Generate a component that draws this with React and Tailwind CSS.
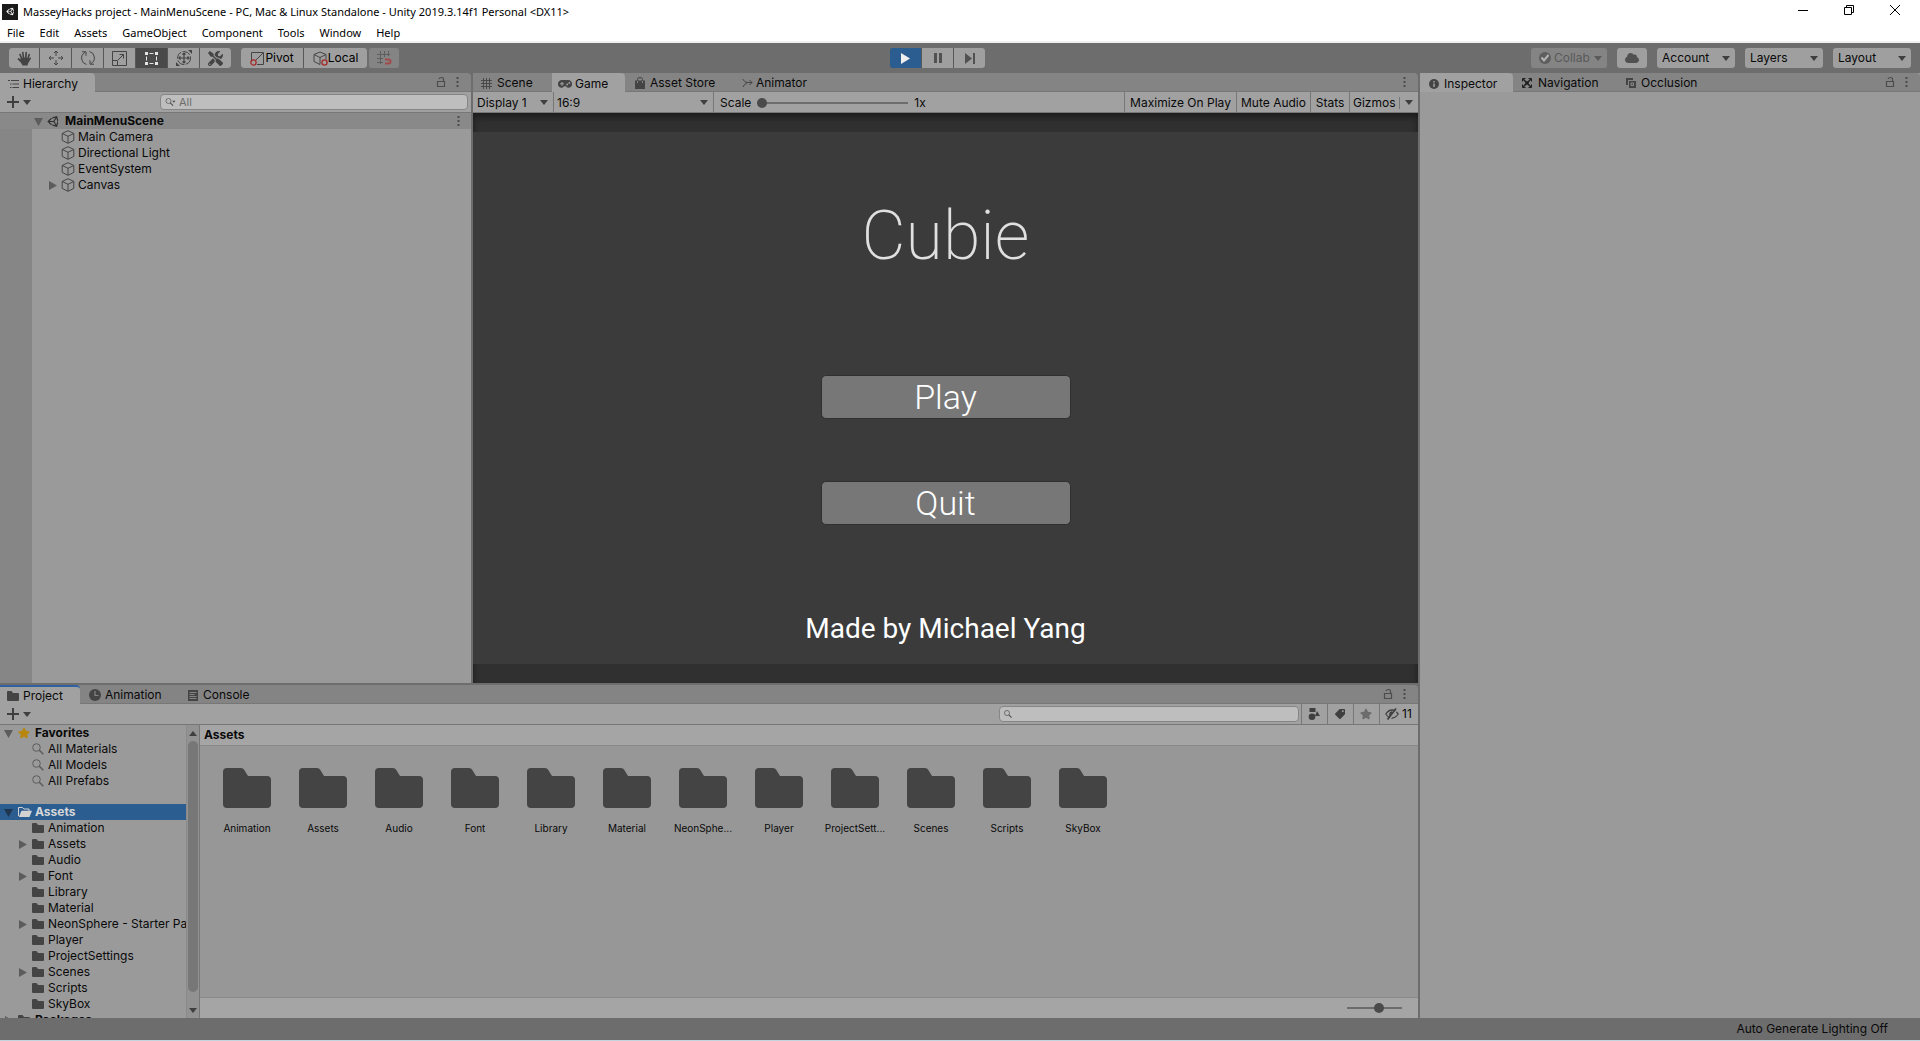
import clsx from "clsx";
import { FaCloud, FaStar, FaTag, FaTools, FaUnity } from "react-icons/fa";

const MENUS = [
  "File",
  "Edit",
  "Assets",
  "GameObject",
  "Component",
  "Tools",
  "Window",
  "Help",
];

const GAME_OBJECTS = [
  { name: "Main Camera" },
  { name: "Directional Light" },
  { name: "EventSystem" },
  { name: "Canvas", expandable: true },
];

const FAVORITES = ["All Materials", "All Models", "All Prefabs"];

const FOLDERS = [
  { name: "Animation" },
  { name: "Assets", expandable: true },
  { name: "Audio" },
  { name: "Font", expandable: true },
  { name: "Library" },
  { name: "Material" },
  { name: "NeonSphere - Starter Pa", short: "NeonSphe...", expandable: true },
  { name: "Player" },
  { name: "ProjectSettings", short: "ProjectSett..." },
  { name: "Scenes", expandable: true },
  { name: "Scripts" },
  { name: "SkyBox" },
];

/* ---------- icons ---------- */

function Svg({ size = 12, w, h, box, className, children }) {
  return (
    <svg
      width={w ?? size}
      height={h ?? size}
      viewBox={box ?? `0 0 ${w ?? size} ${h ?? size}`}
      fill="none"
      stroke="currentColor"
      className={clsx("shrink-0", className)}
      aria-hidden="true"
    >
      {children}
    </svg>
  );
}

const Caret = ({ className }) => (
  <Svg w={8} h={5} className={className}>
    <path d="M0 0h8L4 5z" fill="currentColor" stroke="none" />
  </Svg>
);

const Foldout = ({ open, selected }) => (
  <Svg size={9} className={selected ? "text-[#1f3650]" : "text-[#5c5c5c]"}>
    <path
      d={open ? "M0 1h9L4.500 9z" : "M1 0v9l8-4.500z"}
      fill="currentColor"
      stroke="none"
    />
  </Svg>
);

const FolderIcon = ({ className }) => (
  <Svg w={12} h={10} className={className}>
    <path
      d="M0 1q0-1 1-1h3.500l1.500 2h5q1 0 1 1v6q0 1-1 1H1q-1 0-1-1z"
      fill="currentColor"
      stroke="none"
    />
  </Svg>
);

const BigFolder = () => (
  <Svg w={48} h={40} className="text-[#444444]">
    <path
      d="M0 4q0-4 4-4h14q2 0 3 1.500L25 8h19q4 0 4 4v24q0 4-4 4H4q-4 0-4-4z"
      fill="currentColor"
      stroke="none"
    />
  </Svg>
);

const OpenFolder = () => (
  <Svg w={14} h={10} className="text-[#d2d2d2]">
    <path d="M.5 9V.5H4.500l1.500 1.500h5V4" />
    <path d="M3.500 3.800H14L11.500 10H.8z" fill="currentColor" stroke="none" />
  </Svg>
);

const CubeIcon = () => (
  <Svg size={14} className="text-[#454545]">
    <path d="M7 .7l5.800 2.700v7L7 13.300 1.200 10.400v-7zM1.200 3.500L7 6.300l5.800-2.800M7 6.300v7" />
  </Svg>
);

const LockIcon = () => (
  <Svg w={10} h={12} className="text-[#4c4c4c]">
    <path d="M1.500 5.500h7v5h-7zM7.500 5.500V3.500Q7.500 1.500 5.500 1.500T3 3" strokeWidth="1.200" />
  </Svg>
);

const DotsIcon = () => (
  <Svg w={3} h={11} className="text-[#4c4c4c]">
    <path d="M.5 0h2v2h-2zM.5 4h2v2h-2zM.5 8h2v2h-2z" fill="currentColor" stroke="none" />
  </Svg>
);

const SearchIcon = ({ size = 12, dropdown }) => (
  <Svg w={dropdown ? size + 3 : size} h={size} box={dropdown ? "0 0 15 12" : "0 0 12 12"}>
    <circle cx="4.500" cy="4.500" r="3.800" />
    <path d="M7.300 7.300L11.300 11.300" strokeWidth="1.600" />
    {dropdown && <path d="M10 4h5l-2.500 3z" fill="currentColor" stroke="none" />}
  </Svg>
);

const ListIcon = () => (
  <Svg w={11} h={10}>
    <path d="M0 1.500h2M3 1.500h8M2 5h1.500M4.500 5H11M2 8.500h1.500M4.500 8.500H11" />
  </Svg>
);

const HashIcon = () => (
  <Svg size={11}>
    <path d="M2.500 0v11M5.500 0v11M8.500 0v11M0 2.500h11M0 5.500h11M0 8.500h11" strokeWidth=".9" />
  </Svg>
);

const GamepadIcon = () => (
  <Svg w={14} h={8}>
    <path
      d="M3.800 0h6.400A3.800 3.800 0 0 1 14 4a3.600 3.600 0 0 1-3.600 3.800Q9 7.800 8 6.300H6Q5 7.800 3.600 7.800A3.600 3.600 0 0 1 0 4 3.800 3.800 0 0 1 3.800 0z"
      fill="currentColor"
      stroke="none"
    />
    <path d="M2 3.800h4M4 1.800v4" stroke="#a1a1a1" />
    <circle cx="9.200" cy="4.500" r=".9" fill="#a1a1a1" stroke="none" />
    <circle cx="11.300" cy="3" r=".9" fill="#a1a1a1" stroke="none" />
  </Svg>
);

const BagIcon = () => (
  <Svg w={10} h={12}>
    <path d="M0 3.500h10V12H0z" fill="currentColor" stroke="none" />
    <path d="M2.500 5.500V2.500Q2.500.5 5 .5T7.500 2.500V5.500" />
    <path d="M2.500 4v2M7.500 4v2" stroke="#848484" />
  </Svg>
);

const AnimatorIcon = () => (
  <Svg w={11} h={10}>
    <path d="M.5 1Q3 5 6 4.500h4M1 9Q2 6 5 5M7.500 2L10 4.500 7.500 7" />
  </Svg>
);

const InfoIcon = () => (
  <Svg size={10}>
    <circle cx="5" cy="5" r="5" fill="currentColor" stroke="none" />
    <path d="M5 2v1.400M5 4.400V8" stroke="#a6a6a6" strokeWidth="1.400" />
  </Svg>
);

const NavigationIcon = () => (
  <Svg size={10} className="text-[#202020]">
    <path d="M1 1l8 8M9 1L1 9" strokeWidth="1.500" />
    <path d="M.5 3.500v-3h3M6.500.5h3v3M9.500 6.500v3h-3M3.500 9.500h-3v-3" />
    <circle cx="5" cy="5" r="1.800" fill="currentColor" stroke="none" />
  </Svg>
);

const OcclusionIcon = () => (
  <Svg size={10}>
    <path d="M0 0h7v2H2v5H0z" fill="currentColor" stroke="none" />
    <path d="M3 3h7v7H3z" fill="currentColor" stroke="none" />
    <path d="M5 5h2.500v2.500H5z" stroke="#8c8c8c" />
  </Svg>
);

const ClockIcon = () => (
  <Svg size={12}>
    <circle cx="6" cy="6" r="6" fill="currentColor" stroke="none" />
    <path d="M6 2v4.500h3.500" stroke="#848484" strokeWidth="1.200" />
  </Svg>
);

const ConsoleIcon = () => (
  <Svg w={10} h={11}>
    <path d="M0 0h10v11H0z" fill="currentColor" stroke="none" />
    <path d="M1.500 2.500h7M1.500 4.500h5M1.500 6.500h7M1.500 8.500h7" stroke="#848484" />
  </Svg>
);

const PlusIcon = () => (
  <Svg size={12} className="text-[#3f3f3f]">
    <path d="M6 0v12M0 6h12" strokeWidth="2" />
  </Svg>
);

const HandIcon = () => (
  <Svg size={15}>
    <path
      d="M4.800 8L3 3.500M6.500 7L5.800 1.500M8.800 7l.4-5.500M10.800 8l1.400-4.500M5.500 11.500L1.500 8"
      strokeWidth="1.700"
      strokeLinecap="round"
    />
    <path
      d="M3.900 7.500Q7.500 5.500 11.600 7.500L13.300 6.500Q14.500 6.500 14 7.500L11 12.500 10.500 14.500H5.500L4.500 12.500 2.500 9.500z"
      fill="currentColor"
      stroke="none"
    />
  </Svg>
);

const MoveIcon = () => (
  <Svg size={16}>
    <path d="M8 1v5M8 10v5M1 8h5M10 8h5M6 3l2-2 2 2M6 13l2 2 2-2M3 6L1 8l2 2M13 6l2 2-2 2" />
  </Svg>
);

const RotateIcon = () => (
  <Svg size={16}>
    <path d="M6.500 14.500A6.500 6.500 0 0 1 5 2.500M2 1.800h4v4M9.500 1.500a6.500 6.500 0 0 1 1.500 12M14 14.200h-4v-4" />
  </Svg>
);

const ScaleIcon = () => (
  <Svg size={15}>
    <path d="M.5.5h14v14H.5zM.5 9.500h5v5M6 9l5.500-5.500M7.500 3.500h4v4" />
  </Svg>
);

const RectIcon = () => (
  <Svg size={15} className="text-[#e4e4e4]">
    <path d="M5.500 2.500h4M5.500 12.500h4M2.500 5.500v4M12.500 5.500v4" />
    <path d="M1 1h3v3H1zM11 1h3v3h-3zM1 11h3v3H1zM11 11h3v3h-3z" fill="currentColor" stroke="none" />
  </Svg>
);

const TransformIcon = () => (
  <Svg size={16}>
    <circle cx="8" cy="8" r="6.500" strokeDasharray="8 1.500" />
    <path d="M8 3v10M3 8h10M6.500 4.500L8 3l1.500 1.500M6.500 11.500L8 13l1.500-1.500M4.500 6.500L3 8l1.500 1.500M11.500 6.500L13 8l-1.500 1.500" strokeWidth="1.200" />
    <path d="M12 0h4v4zM0 12v4h4z" fill="currentColor" stroke="none" />
  </Svg>
);

const PivotIcon = () => (
  <Svg size={15}>
    <path d="M1.500 9V1.500h12v12H7M5 10l8-8" />
    <circle cx="3.500" cy="11.500" r="2.600" stroke="#a82828" strokeWidth="1.300" />
  </Svg>
);

const LocalIcon = () => (
  <Svg size={15}>
    <path d="M7 1l6 2.500v5M7 1L1 3.500v7L7 13.500M1 3.500l6 3 6-3M7 6.500v7" />
    <circle cx="11.500" cy="11.500" r="2.600" stroke="#a82828" strokeWidth="1.300" />
  </Svg>
);

const SnapIcon = () => (
  <Svg size={15} className="text-[#5e5e5e]">
    <path d="M3.500 0v13M7.500 0v6M11.500 0v5M0 3.500h13M0 7.500h6M0 11.500h6" />
    <path d="M8 8.500h3.500a2 2 0 0 1 0 4H8" stroke="#a34a4a" strokeWidth="2" />
  </Svg>
);

const ShapesIcon = () => (
  <Svg size={12}>
    <path d="M1.500 0h6v4h-6zM9 3l3 5H7z" fill="currentColor" stroke="none" />
    <circle cx="4" cy="8.700" r="3.300" fill="currentColor" stroke="none" />
  </Svg>
);

const HiddenIcon = () => (
  <Svg w={14} h={12} className="text-[#3f3f3f]">
    <path d="M.8 6Q3.500 2 7 2t6.200 4Q10.500 10 7 10T.8 6z" strokeWidth="1.300" />
    <path d="M5 7.500Q4.500 4.500 7 4" strokeWidth="1.600" />
    <path d="M4.500 11.500L12.500 1" stroke="#a1a1a1" strokeWidth="1.500" />
    <path d="M2.500 11.500L11 .5" strokeWidth="1.700" />
  </Svg>
);

/* ---------- small pieces ---------- */

function Tab({ icon, label, active, focused, className }) {
  return (
    <button
      type="button"
      role="tab"
      aria-selected={!!active}
      className={clsx(
        "flex items-center shrink-0 h-full whitespace-nowrap",
        active ? "bg-[#a1a1a1] rounded-tr-sm" : "border-b border-[#777777]",
        focused ? "border-t-2 border-[#2f62a3]" : "pt-[2px]",
        className
      )}
    >
      <span className="flex text-[#444444]">{icon}</span>
      {label}
    </button>
  );
}

function TabBar({ children, lock = true }) {
  return (
    <div
      role="tablist"
      className="flex shrink-0 h-[19px] bg-[#848484] rounded-tr-sm"
    >
      {children}
      <div className="flex-1 flex items-center justify-end gap-[10px] pr-3 border-b border-[#777777]">
        {lock && <LockIcon />}
        <DotsIcon />
      </div>
    </div>
  );
}

function Dropdown({ label, value, className }) {
  return (
    <div className={clsx("relative flex items-center", className)}>
      <select
        aria-label={label}
        defaultValue={value}
        className="appearance-none w-full h-full outline-none"
      >
        <option>{value}</option>
      </select>
      <Caret className="absolute right-[5px] text-[#3f3f3f] pointer-events-none" />
    </div>
  );
}

function ToolButton({ label, active, className, children }) {
  return (
    <button
      type="button"
      aria-label={label}
      className={clsx(
        "flex items-center justify-center h-5",
        active ? "bg-[#4a4a4a]" : "bg-[#9f9f9f]",
        className
      )}
    >
      {children}
    </button>
  );
}

function Slider({ label, value, className }) {
  return (
    <input
      type="range"
      aria-label={label}
      defaultValue={value}
      className={clsx(
        "appearance-none bg-transparent h-[10px] [&::-webkit-slider-runnable-track]:h-[2px] [&::-webkit-slider-runnable-track]:bg-[#6c6c6c] [&::-webkit-slider-thumb]:appearance-none [&::-webkit-slider-thumb]:size-[10px] [&::-webkit-slider-thumb]:rounded-full [&::-webkit-slider-thumb]:bg-[#4a4a4a] [&::-webkit-slider-thumb]:-mt-1",
        className
      )}
    />
  );
}

function CreateButton() {
  return (
    <button type="button" aria-label="Create" className="flex items-center gap-1 pl-[7px]">
      <PlusIcon />
      <Caret className="text-[#3f3f3f]" />
    </button>
  );
}

function SearchBox({ label, placeholder, dropdown, className }) {
  return (
    <div className={clsx("relative flex items-center", className)}>
      <span className="absolute left-[5px] text-[#4c4c4c]">
        <SearchIcon size={8} dropdown={dropdown} />
      </span>
      <input
        type="text"
        aria-label={label}
        placeholder={placeholder}
        className="w-full h-4 pl-[18px] rounded-[4px] border border-[#868686] bg-[#bebebe] text-[11px] placeholder:text-[#6c6c6c] outline-none"
      />
    </div>
  );
}

/* ---------- window chrome ---------- */

function TitleBar() {
  return (
    <header className="shrink-0 bg-white text-black text-[11px] border-b-2 border-[#f0f0f0] font-['Noto_Sans','Open_Sans',sans-serif]">
      <div className="flex h-[23px] px-[2px]">
        <div className="flex items-center gap-[5px] flex-1">
          <span className="flex items-center justify-center size-4 bg-[#1a1a1a] text-white">
            <FaUnity size={9} />
          </span>
          <h1 className="whitespace-nowrap">
            MasseyHacks project - MainMenuScene - PC, Mac &amp; Linux Standalone
            - Unity 2019.3.14f1 Personal &lt;DX11&gt;
          </h1>
        </div>
        <div className="flex h-5">
          <button type="button" aria-label="Minimize" className="flex items-center justify-center w-[46px]">
            <Svg size={10}>
              <path d="M0 5.500h10" />
            </Svg>
          </button>
          <button type="button" aria-label="Restore" className="flex items-center justify-center w-[46px]">
            <Svg size={10}>
              <path d="M.5 2.500h7v7h-7zM2.500 2.500v-2h7v7h-2" />
            </Svg>
          </button>
          <button type="button" aria-label="Close" className="flex items-center justify-center w-[46px]">
            <Svg size={10}>
              <path d="M0 0l10 10M10 0L0 10" />
            </Svg>
          </button>
        </div>
      </div>
      <nav className="flex h-[18px] items-center gap-[15px] pt-px pl-[7px]">
        {MENUS.map((m) => (
          <button type="button" key={m}>
            {m}
          </button>
        ))}
      </nav>
    </header>
  );
}

function Toolbar() {
  return (
    <div className="grid grid-cols-[1fr_140px_1fr] shrink-0 h-[30px] items-center bg-[#6d6d6d] px-[9px]">
      <div className="flex items-center text-[#444444]">
        <div className="flex gap-px bg-[#585858] rounded-[3px] overflow-hidden">
          <ToolButton label="Hand" className="w-[30px]">
            <HandIcon />
          </ToolButton>
          <ToolButton label="Move" className="w-[31px]">
            <MoveIcon />
          </ToolButton>
          <ToolButton label="Rotate" className="w-[31px]">
            <RotateIcon />
          </ToolButton>
          <ToolButton label="Scale" className="w-[31px]">
            <ScaleIcon />
          </ToolButton>
          <ToolButton label="Rect" active className="w-[31px]">
            <RectIcon />
          </ToolButton>
          <ToolButton label="Transform" className="w-[31px]">
            <TransformIcon />
          </ToolButton>
          <ToolButton label="Custom tools" className="w-[31px]">
            <FaTools size={15} />
          </ToolButton>
        </div>
        <div className="flex gap-px ml-[10px] bg-[#585858] rounded-[3px] overflow-hidden">
          <ToolButton className="w-[62px]">
            <PivotIcon />
            <span className="text-black">Pivot</span>
          </ToolButton>
          <ToolButton className="w-[63px]">
            <LocalIcon />
            <span className="text-black">Local</span>
          </ToolButton>
        </div>
        <button
          type="button"
          aria-label="Snap"
          className="flex items-center justify-center h-5 w-[30px] ml-[2px] rounded-[3px] bg-[#848484]"
        >
          <SnapIcon />
        </button>
      </div>

      <div className="flex">
        <div className="flex gap-px bg-[#585858] rounded-[3px] overflow-hidden text-[#515151]">
          <button type="button" aria-label="Play" className="flex items-center justify-center w-[31px] h-5 bg-[#2c5d90] text-[#f0f0f0]">
            <Svg w={9} h={11}>
              <path d="M0 0l9 5.500L0 11z" fill="currentColor" stroke="none" />
            </Svg>
          </button>
          <ToolButton label="Pause" className="w-[31px]">
            <Svg w={8} h={10}>
              <path d="M0 0h3v10H0zM5 0h3v10H5z" fill="currentColor" stroke="none" />
            </Svg>
          </ToolButton>
          <ToolButton label="Step" className="w-[31px]">
            <Svg w={10} h={11}>
              <path d="M0 0l7 5.500L0 11zM8 0h2v11H8z" fill="currentColor" stroke="none" />
            </Svg>
          </ToolButton>
        </div>
      </div>

      <div className="flex items-center justify-end gap-[10px]">
        <button
          type="button"
          className="flex items-center gap-[3px] h-5 w-[76px] pl-2 rounded-[3px] bg-[#848484] text-[#5a5a5a]"
        >
          <Svg size={12}>
            <circle cx="6" cy="6" r="6" fill="#5e5e5e" stroke="none" />
            <path d="M2.500 5.500l2.500 3L9.500 3" stroke="#b4b4b4" strokeWidth="2" />
          </Svg>
          Collab
          <Caret className="ml-px" />
        </button>
        <button
          type="button"
          aria-label="Cloud services"
          className="flex items-center justify-center h-5 w-[30px] rounded-[3px] bg-[#9f9f9f] text-[#515151]"
        >
          <FaCloud size={14} />
        </button>
        <Dropdown label="Account" value="Account" className="h-5 w-[78px] pl-[5px] rounded-[3px] bg-[#9f9f9f]" />
        <Dropdown label="Layers" value="Layers" className="h-5 w-[78px] pl-[5px] rounded-[3px] bg-[#9f9f9f]" />
        <Dropdown label="Layout" value="Layout" className="h-5 w-[78px] pl-[5px] rounded-[3px] bg-[#9f9f9f]" />
      </div>
    </div>
  );
}

/* ---------- panels ---------- */

function HierarchyPanel() {
  return (
    <section className="flex flex-col w-[471px] shrink-0">
      <TabBar>
        <Tab icon={<ListIcon />} label="Hierarchy" active className="w-[95px] pl-2 gap-1" />
      </TabBar>
      <div className="flex shrink-0 justify-between h-[21px] bg-[#a1a1a1] border-b border-[#777777]">
        <CreateButton />
        <SearchBox label="Search hierarchy" placeholder="All" dropdown className="w-[308px] mr-[3px]" />
      </div>
      <div className="flex-1 bg-[linear-gradient(to_right,#868686_32px,#9a9a9a_32px)]">
        <div className="flex items-center h-4 pl-[34px] pr-[11px] bg-[#898989] font-bold">
          <Foldout open />
          <FaUnity size={13} className="ml-1 mr-[5px] text-[#303030]" />
          <span className="flex-1">MainMenuScene</span>
          <DotsIcon />
        </div>
        <ul>
          {GAME_OBJECTS.map((o) => (
            <li key={o.name} className="flex items-center h-4 pl-12">
              <span className="w-[13px]">{o.expandable && <Foldout />}</span>
              <CubeIcon />
              <span className="ml-[3px]">{o.name}</span>
            </li>
          ))}
        </ul>
      </div>
    </section>
  );
}

function GamePanel() {
  return (
    <section className="flex flex-col flex-1 min-w-0">
      <TabBar lock={false}>
        <Tab icon={<HashIcon />} label="Scene" className="w-[79px] pl-2 gap-[5px]" />
        <Tab icon={<GamepadIcon />} label="Game" active className="w-[73px] pl-[6px] gap-[3px]" />
        <Tab icon={<BagIcon />} label="Asset Store" className="w-[107px] pl-[10px] gap-[5px]" />
        <Tab icon={<AnimatorIcon />} label="Animator" className="w-[92px] pl-[10px] gap-[3px]" />
      </TabBar>
      <div className="flex shrink-0 h-[21px] bg-[#a1a1a1] border-b border-[#777777]">
        <Dropdown label="Display" value="Display 1" className="w-[81px] pt-px pl-1 border-r border-[#777777]" />
        <Dropdown label="Aspect ratio" value="16:9" className="w-[160px] pt-px pl-[3px] border-r border-[#777777]" />
        <label className="flex items-center flex-1 pt-px pl-[6px]">
          Scale
          <Slider label="Scale" value={0} className="w-[151px] mx-[6px]" />
          1x
        </label>
        <button type="button" className="w-[112px] pt-px border-l border-[#777777]">
          Maximize On Play
        </button>
        <button type="button" className="w-[74px] pt-px border-l border-[#777777]">
          Mute Audio
        </button>
        <button type="button" className="w-[39px] pt-px border-l border-[#777777]">
          Stats
        </button>
        <button type="button" className="flex items-center w-[69px] pt-px pl-[3px] border-l border-[#777777]">
          <span className="w-[47px] text-left border-r border-[#777777] leading-3">Gizmos</span>
          <Caret className="ml-[5px] text-[#3f3f3f]" />
        </button>
      </div>

      <div className="flex flex-1 items-center bg-[#303030] shadow-[inset_0_4px_6px_#1c1c1c]">
        <div className="flex flex-col items-center w-full aspect-video bg-[#3b3b3b] text-white font-[Roboto,sans-serif]">
          <h2 className="mt-[66px] text-[68px] leading-[76px] font-extralight text-[#e0e0e0]">Cubie</h2>
          <button
            type="button"
            className="mt-[101px] w-[250px] h-[44px] rounded-[5px] border border-[#303030] bg-[#777777] text-[34px] leading-[42px] font-light"
          >
            Play
          </button>
          <button
            type="button"
            className="mt-[62px] w-[250px] h-[44px] rounded-[5px] border border-[#303030] bg-[#777777] text-[34px] leading-[42px] font-light"
          >
            Quit
          </button>
          <p className="mt-[87px] text-[28px] leading-[34px]">Made by Michael Yang</p>
        </div>
      </div>
    </section>
  );
}

function ProjectTree() {
  return (
    <div className="flex w-[199px] shrink-0 bg-[#9a9a9a]">
      <div className="w-[186px] overflow-hidden whitespace-nowrap">
        <div className="flex items-center h-4 pl-1 font-bold">
          <Foldout open />
          <FaStar size={12} className="mx-[5px] text-[#b8860b]" />
          Favorites
        </div>
        <ul>
          {FAVORITES.map((f) => (
            <li key={f} className="flex items-center h-4 pl-8">
              <span className="w-4 text-[#5c5c5c]">
                <SearchIcon />
              </span>
              {f}
            </li>
          ))}
        </ul>
        <div className="flex items-center h-4 mt-[15px] pl-1 bg-[#2c5d90] text-[#d8d8d8] font-bold">
          <Foldout open selected />
          <span className="ml-[5px] mr-[3px]">
            <OpenFolder />
          </span>
          Assets
        </div>
        <ul>
          {FOLDERS.map((f) => (
            <li key={f.name} className="flex items-center h-4 pl-[18px]">
              <span className="w-[14px] shrink-0">{f.expandable && <Foldout />}</span>
              <FolderIcon className="text-[#444444]" />
              <span className="ml-1">{f.name}</span>
            </li>
          ))}
        </ul>
        <div className="flex items-center h-4 pl-1 font-bold">
          <Foldout />
          <FolderIcon className="mx-[5px] text-[#444444]" />
          Packages
        </div>
      </div>
      <div className="flex flex-col items-center flex-1 pt-[6px] pb-[5px] border-l border-[#8a8a8a] bg-[#929292] text-[#3f3f3f]">
        <Caret className="rotate-180" />
        <div className="flex-1 w-[10px] mt-[5px] mb-4 rounded-full bg-[#777777]" />
        <Caret />
      </div>
    </div>
  );
}

function ProjectPanel() {
  return (
    <section className="flex flex-col h-[333px] shrink-0">
      <TabBar>
        <Tab icon={<FolderIcon />} label="Project" active focused className="w-[80px] pl-[7px] gap-1" />
        <Tab icon={<ClockIcon />} label="Animation" className="w-[98px] pl-[9px] gap-1" />
        <Tab icon={<ConsoleIcon />} label="Console" className="w-[88px] pl-[10px] gap-[5px]" />
      </TabBar>
      <div className="flex shrink-0 h-[21px] bg-[#a1a1a1] border-b border-[#777777]">
        <CreateButton />
        <SearchBox label="Search project" className="w-[300px] ml-auto mr-[2px]" />
        <button type="button" aria-label="Search by type" className="flex items-center justify-center w-[26px] pr-[2px] border-l border-[#777777] text-[#3f3f3f]">
          <ShapesIcon />
        </button>
        <button type="button" aria-label="Search by label" className="flex items-center justify-center w-[26px] pr-[2px] border-l border-[#777777] text-[#3f3f3f]">
          <FaTag size={10} className="-scale-x-100" />
        </button>
        <button type="button" aria-label="Save search" className="flex items-center justify-center w-[26px] pr-[2px] border-l border-[#777777] text-[#6c6c6c]">
          <FaStar size={12} />
        </button>
        <button type="button" className="flex items-center w-[39px] pl-[5px] gap-[3px] border-l border-[#777777]">
          <HiddenIcon />
          11
        </button>
      </div>
      <div className="flex flex-1 min-h-0">
        <ProjectTree />
        <div className="flex flex-col flex-1 border-l border-[#777777]">
          <h2 className="h-[21px] pl-1 leading-5 font-bold bg-[#a5a5a5] border-b border-[#8a8a8a]">
            Assets
          </h2>
          <ul className="flex flex-wrap content-start flex-1 pt-[22px] pl-[9px] bg-[#979797]">
            {FOLDERS.map((f) => (
              <li key={f.name} className="flex flex-col items-center w-[76px]">
                <BigFolder />
                <span className="mt-[14px] text-[10px] leading-3">{f.short ?? f.name}</span>
              </li>
            ))}
          </ul>
          <div className="flex items-center justify-end h-[21px] pr-4 bg-[#a5a5a5] border-t border-[#8a8a8a]">
            <Slider label="Icon size" value={60} className="w-[55px]" />
          </div>
        </div>
      </div>
    </section>
  );
}

function InspectorPanel() {
  return (
    <section className="flex flex-col w-[500px] shrink-0 bg-[#9a9a9a]">
      <TabBar>
        <Tab icon={<InfoIcon />} label="Inspector" active className="w-[93px] pl-[9px] gap-[5px]" />
        <Tab icon={<NavigationIcon />} label="Navigation" className="w-[104px] pl-[9px] gap-[6px]" />
        <Tab icon={<OcclusionIcon />} label="Occlusion" className="w-[97px] pl-[9px] gap-[5px]" />
      </TabBar>
    </section>
  );
}

export default function App() {
  return (
    <div className="flex flex-col h-screen overflow-hidden bg-[#6d6d6d] text-[12px] leading-4 text-[#090909] font-[Inter,sans-serif]">
      <TitleBar />
      <Toolbar />
      <main className="flex flex-1 min-h-0 gap-[2px]">
        <div className="flex flex-col flex-1 min-w-0 gap-[2px]">
          <div className="flex flex-1 min-h-0 gap-[2px]">
            <HierarchyPanel />
            <GamePanel />
          </div>
          <ProjectPanel />
        </div>
        <InspectorPanel />
      </main>
      <footer className="flex items-center justify-end shrink-0 h-[23px] pr-8 border-b border-[#c4d4de]">
        Auto Generate Lighting Off
      </footer>
    </div>
  );
}
